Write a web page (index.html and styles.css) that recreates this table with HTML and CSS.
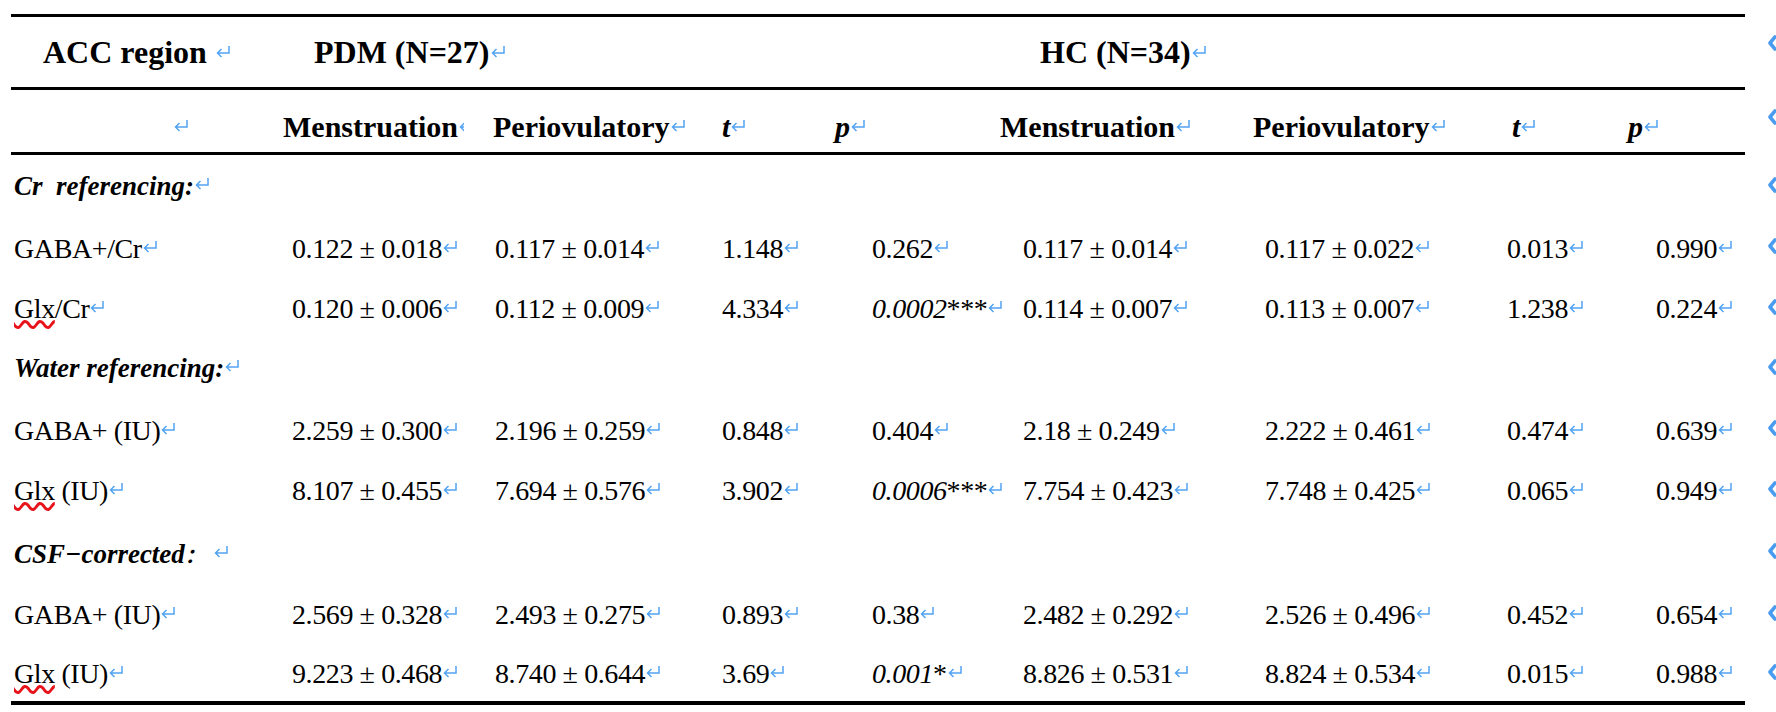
FILE: index.html
```html
<!DOCTYPE html>
<html>
<head>
<meta charset="utf-8">
<link rel="stylesheet" href="styles.css">
</head>
<body>
<div class="sheet">
  <div class="table">
    <div class="row head1">
      <div class="c">ACC region <span class="m"></span></div>
      <div class="c">PDM (N=27)<span class="m"></span></div>
      <div class="c">HC (N=34)<span class="m"></span></div>
    </div>
    <div class="row head2">
      <div class="c"><span class="m"></span></div>
      <div class="c">Menstruation<span class="m cut"></span></div>
      <div class="c">Periovulatory<span class="m"></span></div>
      <div class="c"><i>t</i><span class="m"></span></div>
      <div class="c"><i>p</i><span class="m"></span></div>
      <div class="c">Menstruation<span class="m"></span></div>
      <div class="c">Periovulatory<span class="m"></span></div>
      <div class="c"><i>t</i><span class="m"></span></div>
      <div class="c"><i>p</i><span class="m"></span></div>
    </div>
    <div class="row section"><div class="c">Cr&nbsp; referencing:<span class="m"></span></div></div>
    <div class="row data">
      <div class="c">GABA+/Cr<span class="m"></span></div>
      <div class="c">0.122 ± 0.018<span class="m"></span></div>
      <div class="c">0.117 ± 0.014<span class="m"></span></div>
      <div class="c">1.148<span class="m"></span></div>
      <div class="c">0.262<span class="m"></span></div>
      <div class="c">0.117 ± 0.014<span class="m"></span></div>
      <div class="c">0.117 ± 0.022<span class="m"></span></div>
      <div class="c">0.013<span class="m"></span></div>
      <div class="c">0.990<span class="m"></span></div>
    </div>
    <div class="row data">
      <div class="c"><span class="sp">Glx</span>/Cr<span class="m"></span></div>
      <div class="c">0.120 ± 0.006<span class="m"></span></div>
      <div class="c">0.112 ± 0.009<span class="m"></span></div>
      <div class="c">4.334<span class="m"></span></div>
      <div class="c"><i>0.0002</i>***<span class="m"></span></div>
      <div class="c">0.114 ± 0.007<span class="m"></span></div>
      <div class="c">0.113 ± 0.007<span class="m"></span></div>
      <div class="c">1.238<span class="m"></span></div>
      <div class="c">0.224<span class="m"></span></div>
    </div>
    <div class="row section"><div class="c">Water referencing:<span class="m"></span></div></div>
    <div class="row data">
      <div class="c">GABA+ (IU)<span class="m"></span></div>
      <div class="c">2.259 ± 0.300<span class="m"></span></div>
      <div class="c">2.196 ± 0.259<span class="m"></span></div>
      <div class="c">0.848<span class="m"></span></div>
      <div class="c">0.404<span class="m"></span></div>
      <div class="c">2.18 ± 0.249<span class="m"></span></div>
      <div class="c">2.222 ± 0.461<span class="m"></span></div>
      <div class="c">0.474<span class="m"></span></div>
      <div class="c">0.639<span class="m"></span></div>
    </div>
    <div class="row data">
      <div class="c"><span class="sp">Glx</span> (IU)<span class="m"></span></div>
      <div class="c">8.107 ± 0.455<span class="m"></span></div>
      <div class="c">7.694 ± 0.576<span class="m"></span></div>
      <div class="c">3.902<span class="m"></span></div>
      <div class="c"><i>0.0006</i>***<span class="m"></span></div>
      <div class="c">7.754 ± 0.423<span class="m"></span></div>
      <div class="c">7.748 ± 0.425<span class="m"></span></div>
      <div class="c">0.065<span class="m"></span></div>
      <div class="c">0.949<span class="m"></span></div>
    </div>
    <div class="row section csf"><div class="c">CSF−corrected<span class="colon">：</span><span class="m"></span></div></div>
    <div class="row data tail">
      <div class="c">GABA+ (IU)<span class="m"></span></div>
      <div class="c">2.569 ± 0.328<span class="m"></span></div>
      <div class="c">2.493 ± 0.275<span class="m"></span></div>
      <div class="c">0.893<span class="m"></span></div>
      <div class="c">0.38<span class="m"></span></div>
      <div class="c">2.482 ± 0.292<span class="m"></span></div>
      <div class="c">2.526 ± 0.496<span class="m"></span></div>
      <div class="c">0.452<span class="m"></span></div>
      <div class="c">0.654<span class="m"></span></div>
    </div>
    <div class="row data tail">
      <div class="c"><span class="sp">Glx</span> (IU)<span class="m"></span></div>
      <div class="c">9.223 ± 0.468<span class="m"></span></div>
      <div class="c">8.740 ± 0.644<span class="m"></span></div>
      <div class="c">3.69<span class="m"></span></div>
      <div class="c"><i>0.001</i>*<span class="m"></span></div>
      <div class="c">8.826 ± 0.531<span class="m"></span></div>
      <div class="c">8.824 ± 0.534<span class="m"></span></div>
      <div class="c">0.015<span class="m"></span></div>
      <div class="c">0.988<span class="m"></span></div>
    </div>
  </div>
</div>
</body>
</html>
```
FILE: styles.css
```css
html, body {
  margin: 0;
  padding: 0;
  background: #ffffff;
}
body {
  width: 1776px;
  height: 712px;
  overflow: hidden;
  font-family: "Liberation Serif", "Times New Roman", "Noto Sans CJK SC", serif;
  color: #000;
}
.sheet {
  padding: 14px 0 0 11px;
}
.table {
  width: 1734px;
  border-top: 3px solid #000;
  border-bottom: 4px solid #000;
}
.row {
  display: grid;
  align-items: center;
  position: relative;
  box-sizing: border-box;
}
.row::after {
  content: "";
  position: absolute;
  left: 1756px;
  top: calc(50% - 8px);
  width: 12px;
  height: 16px;
  background: url("data:image/svg+xml;utf8,<svg xmlns='http://www.w3.org/2000/svg' width='12' height='16' viewBox='0 0 12 16'><path d='M8 2 L3 8 L8 14' fill='none' stroke='%234a9cf0' stroke-width='3.6' stroke-linecap='round' stroke-linejoin='round'/></svg>") no-repeat;
}
.c {
  white-space: nowrap;
}
.head1 {
  grid-template-columns: 303px 726px 1fr;
  height: 73px;
  border-bottom: 3px solid #000;
  font-weight: bold;
  font-size: 32px;
}
.head1::after {
  top: calc(50% - 17px);
}
.head1 .c:first-child {
  padding-left: 32px;
}
.head2 {
  grid-template-columns: 272px 210px 229px 113px 165px 253px 259px 116px 1fr;
  height: 65px;
  padding-top: 12px;
  border-bottom: 3px solid #000;
  font-weight: bold;
  font-size: 30px;
}
.head2::after {
  top: calc(50% - 12px);
}
.head2 .c:first-child {
  padding-left: 162px;
}
.data {
  grid-template-columns: 281px 203px 227px 150px 151px 242px 242px 149px 1fr;
  height: 60.7px;
  padding-top: 5px;
  font-size: 28px;
  letter-spacing: -0.4px;
}
.data .c:first-child {
  padding-left: 3px;
}
.data.tail {
  height: 59px;
}
.section {
  height: 60.7px;
  padding-top: 2px;
  font-size: 27px;
  font-weight: bold;
  font-style: italic;
  padding-left: 3px;
}
.section.csf {
  height: 64px;
  padding-top: 6px;
}
.colon {
  font-family: "Noto Sans CJK SC", sans-serif;
  font-size: 20px;
  margin-right: 8px;
}
.sp {
  text-decoration: underline wavy #e8141c;
  text-decoration-thickness: 2.5px;
  text-underline-offset: 2px;
}
.m {
  display: inline-block;
  width: 16px;
  height: 13px;
  vertical-align: 5px;
  letter-spacing: 0;
  background: url("data:image/svg+xml;utf8,<svg xmlns='http://www.w3.org/2000/svg' width='16' height='13' viewBox='0 0 16 13'><path d='M14 1 V8 H2.5 M6.5 4 L2.5 8 L6.5 12' fill='none' stroke='%2352a3f2' stroke-width='1.5'/></svg>") no-repeat;
}
.m.cut {
  width: 6px;
}
```
